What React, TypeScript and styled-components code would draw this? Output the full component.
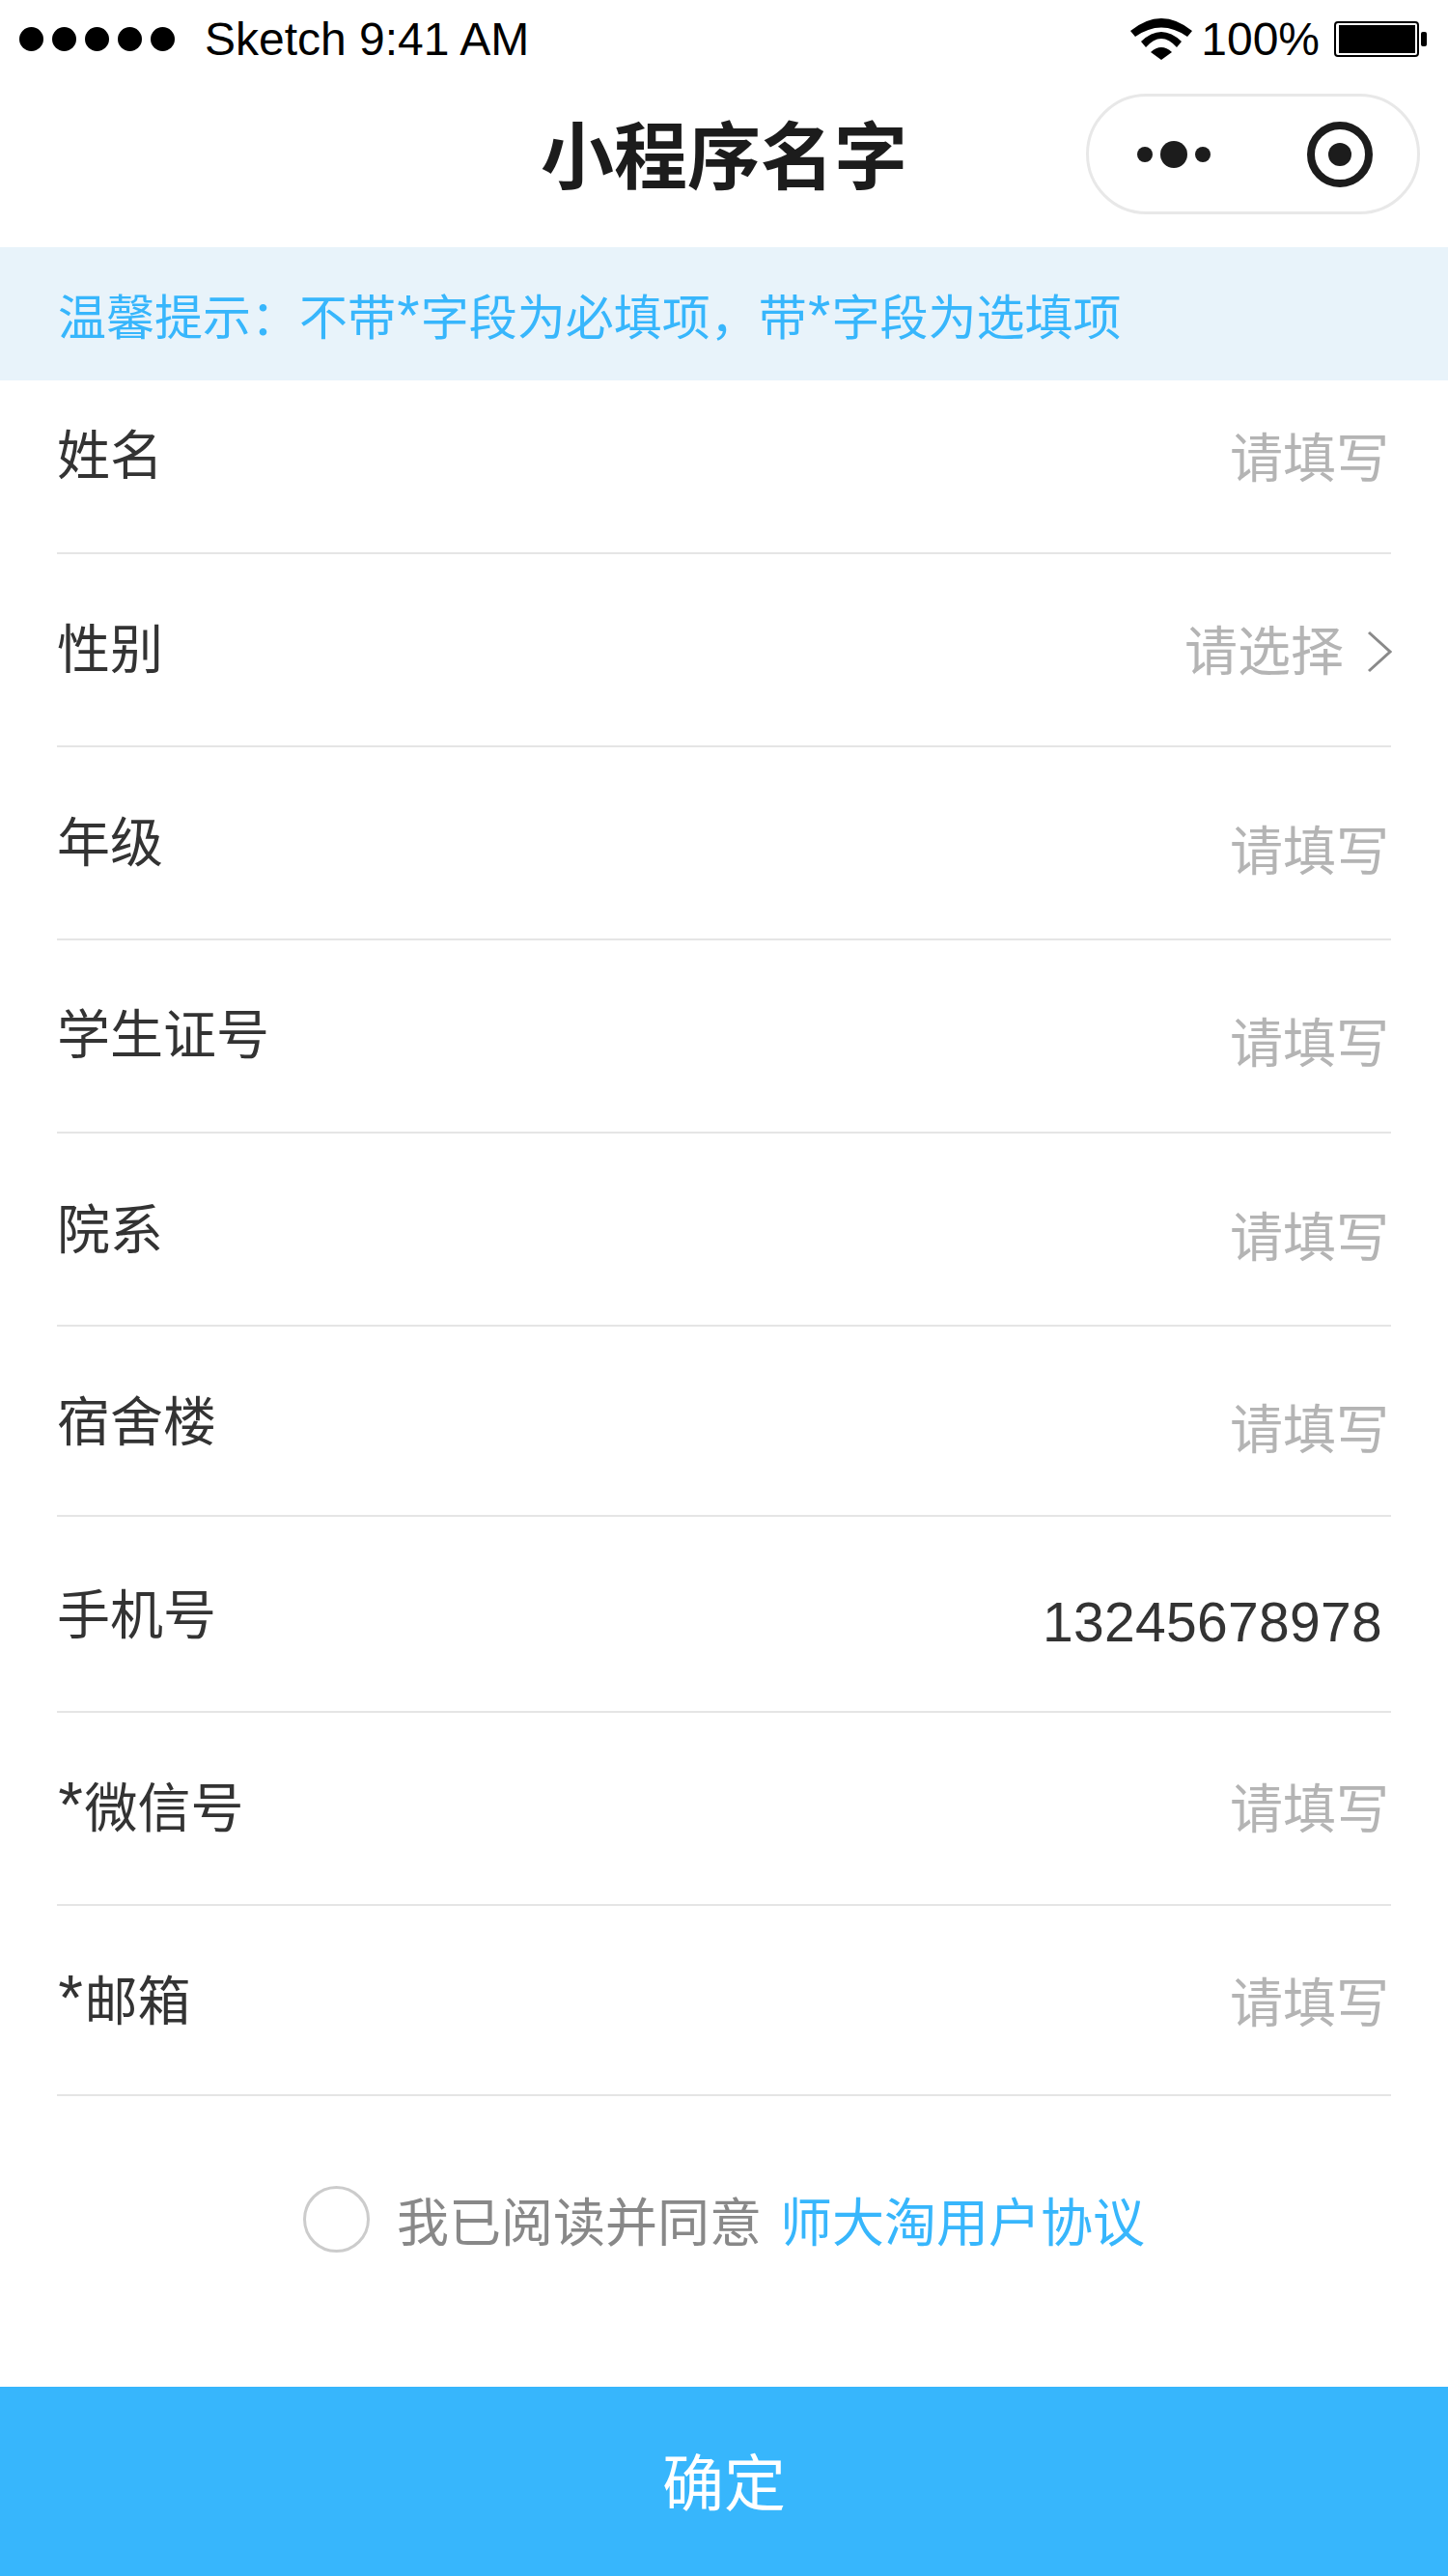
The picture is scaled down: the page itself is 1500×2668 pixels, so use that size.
import React from 'react';
import styled, { createGlobalStyle } from 'styled-components';

const GlobalStyle = createGlobalStyle`
  html, body {
    margin: 0;
    padding: 0;
    background: #fff;
  }
`;

const CJK = `"Liberation Sans", "Noto Sans CJK SC", sans-serif`;
const BLUE = '#37b6fc';

const Page = styled.div`
  width: 1500px;
  height: 2668px;
  display: flex;
  flex-direction: column;
  background: #fff;
  font-family: ${CJK};
  overflow: hidden;
`;

const StatusBar = styled.div`
  height: 82px;
  box-sizing: border-box;
  padding: 0 22px 2px 20px;
  display: flex;
  align-items: center;
  justify-content: space-between;
  color: #000;
  font-size: 48px;
`;

const StatusGroup = styled.div`
  display: flex;
  align-items: center;
`;

const SignalDots = styled.div`
  display: flex;
  gap: 9px;
  margin-right: 31px;
`;

const SignalDot = styled.span`
  width: 25px;
  height: 25px;
  border-radius: 50%;
  background: #000;
`;

const StatusText = styled.span`
  white-space: pre;
`;

const BatteryPercent = styled(StatusText)`
  margin: 0 15px 0 9px;
`;

const NavBar = styled.div`
  height: 174px;
  box-sizing: border-box;
  padding-bottom: 25px;
  position: relative;
  display: flex;
  align-items: center;
  justify-content: center;
`;

const Title = styled.div`
  font-size: 76px;
  font-weight: 700;
  color: #1c1c1c;
`;

const Capsule = styled.div`
  position: absolute;
  right: 29px;
  top: 15px;
  box-sizing: border-box;
  width: 346px;
  height: 125px;
  border: 3px solid #e8e8e8;
  border-radius: 63px;
  display: flex;
  align-items: center;
  padding-left: 50px;
`;

const Notice = styled.div`
  height: 138px;
  display: flex;
  align-items: center;
  padding-left: 60px;
  background: #e8f3fa;
  color: ${BLUE};
  font-size: 50px;
`;

const Star = styled.span`
  display: inline-block;
  width: 0.43em;
  font-size: 1.2em;
  line-height: 1;
  text-align: center;
`;

const Form = styled.div`
  padding: 0 59px;
`;

const Row = styled.div<{ $height: number }>`
  height: ${p => p.$height}px;
  box-sizing: border-box;
  border-bottom: 2px solid #e5e5e5;
  display: flex;
  justify-content: space-between;
  align-items: flex-start;
`;

const Label = styled.div<{ $top: number }>`
  font-size: 55px;
  line-height: 80px;
  margin-top: ${p => p.$top}px;
  color: #333;
`;

const ValueBox = styled.div<{ $top: number }>`
  display: flex;
  align-items: center;
  height: 80px;
  margin-top: ${p => p.$top}px;
`;

const Placeholder = styled.span`
  font-size: 55px;
  line-height: 80px;
  color: #b4b4b4;
  margin-right: 2px;
`;

const FilledValue = styled.span`
  font-size: 57px;
  line-height: 80px;
  letter-spacing: 0.3px;
  color: #333;
  margin-right: 9px;
`;

const Chevron = styled.svg`
  margin: 0 -1px 0 22px;
`;

const Agreement = styled.div`
  height: 301px;
  box-sizing: border-box;
  padding-bottom: 46px;
  display: flex;
  align-items: center;
  justify-content: center;
  font-size: 54px;
  color: #888;
`;

const Radio = styled.span`
  box-sizing: border-box;
  width: 69px;
  height: 69px;
  border: 3px solid #ccc;
  border-radius: 50%;
  margin-right: 28px;
`;

const AgreementLink = styled.span`
  color: ${BLUE};
  margin-left: 19px;
`;

const SubmitButton = styled.div`
  flex: 1;
  box-sizing: border-box;
  padding-bottom: 6px;
  display: flex;
  align-items: center;
  justify-content: center;
  background: ${BLUE};
  color: #fff;
  font-size: 64px;
`;

const TargetSvg = styled.svg`
  margin-left: 100px;
`;

type FormRow = {
  label: React.ReactNode;
  height: number;
  labelTop: number;
  valueTop: number;
  select?: boolean;
  value?: string;
};

const rows: FormRow[] = [
  { label: '姓名', height: 180, labelTop: 38, valueTop: 41 },
  { label: '性别', height: 200, labelTop: 59, valueTop: 61, select: true },
  { label: '年级', height: 200, labelTop: 59, valueTop: 68 },
  { label: '学生证号', height: 200, labelTop: 58, valueTop: 67 },
  { label: '院系', height: 200, labelTop: 60, valueTop: 68 },
  { label: '宿舍楼', height: 197, labelTop: 59, valueTop: 67 },
  { label: '手机号', height: 203, labelTop: 62, valueTop: 69, value: '13245678978' },
  { label: <><Star>*</Star>微信号</>, height: 200, labelTop: 59, valueTop: 60 },
  { label: <><Star>*</Star>邮箱</>, height: 197, labelTop: 59, valueTop: 61 },
];

const WifiIcon = () => (
  <svg width="64" height="43" viewBox="0 0 64 43">
    <path d="M0 13 Q32 -13 64 13 L59 19 Q32 0 5 19 Z" fill="#000" />
    <path d="M11 24 Q32 4 53 24 L48 30 Q32 12 16 30 Z" fill="#000" />
    <path d="M21 35 Q32 25 43 35 L32 43 Z" fill="#000" />
  </svg>
);

const BatteryIcon = () => (
  <svg width="96" height="37" viewBox="0 0 96 37">
    <rect x="1" y="1" width="86" height="35" rx="3" fill="none" stroke="#000" strokeWidth="2" />
    <rect x="5" y="4" width="79" height="29" fill="#000" />
    <rect x="90" y="11" width="6" height="15" rx="2" fill="#000" />
  </svg>
);

const MoreIcon = () => (
  <svg width="76" height="28" viewBox="0 0 76 28">
    <circle cx="8" cy="14" r="8" fill="#1c1c1c" />
    <circle cx="38" cy="14" r="14" fill="#1c1c1c" />
    <circle cx="68" cy="14" r="8" fill="#1c1c1c" />
  </svg>
);

const TargetIcon = () => (
  <TargetSvg width="68" height="68" viewBox="0 0 68 68">
    <circle cx="34" cy="34" r="30" fill="none" stroke="#1c1c1c" strokeWidth="8" />
    <circle cx="34" cy="34" r="12" fill="#1c1c1c" />
  </TargetSvg>
);

export default function App() {
  return (
    <Page>
      <GlobalStyle />
      <StatusBar>
        <StatusGroup>
          <SignalDots>
            {[0, 1, 2, 3, 4].map(i => (
              <SignalDot key={i} />
            ))}
          </SignalDots>
          <StatusText>Sketch 9:41 AM</StatusText>
        </StatusGroup>
        <StatusGroup>
          <WifiIcon />
          <BatteryPercent>100%</BatteryPercent>
          <BatteryIcon />
        </StatusGroup>
      </StatusBar>
      <NavBar>
        <Title>小程序名字</Title>
        <Capsule>
          <MoreIcon />
          <TargetIcon />
        </Capsule>
      </NavBar>
      <Notice>
        <span>
          温馨提示：不带<Star>*</Star>字段为必填项，带<Star>*</Star>字段为选填项
        </span>
      </Notice>
      <Form>
        {rows.map((row, i) => (
          <Row key={i} $height={row.height}>
            <Label $top={row.labelTop}>{row.label}</Label>
            <ValueBox $top={row.valueTop}>
              {row.value ? (
                <FilledValue>{row.value}</FilledValue>
              ) : row.select ? (
                <>
                  <Placeholder>请选择</Placeholder>
                  <Chevron width="26" height="44" viewBox="0 0 26 44">
                    <path d="M2 2 L24 22 L2 42" fill="none" stroke="#8a8a8a" strokeWidth="3" />
                  </Chevron>
                </>
              ) : (
                <Placeholder>请填写</Placeholder>
              )}
            </ValueBox>
          </Row>
        ))}
      </Form>
      <Agreement>
        <Radio />
        我已阅读并同意
        <AgreementLink>师大淘用户协议</AgreementLink>
      </Agreement>
      <SubmitButton>确定</SubmitButton>
    </Page>
  );
}
